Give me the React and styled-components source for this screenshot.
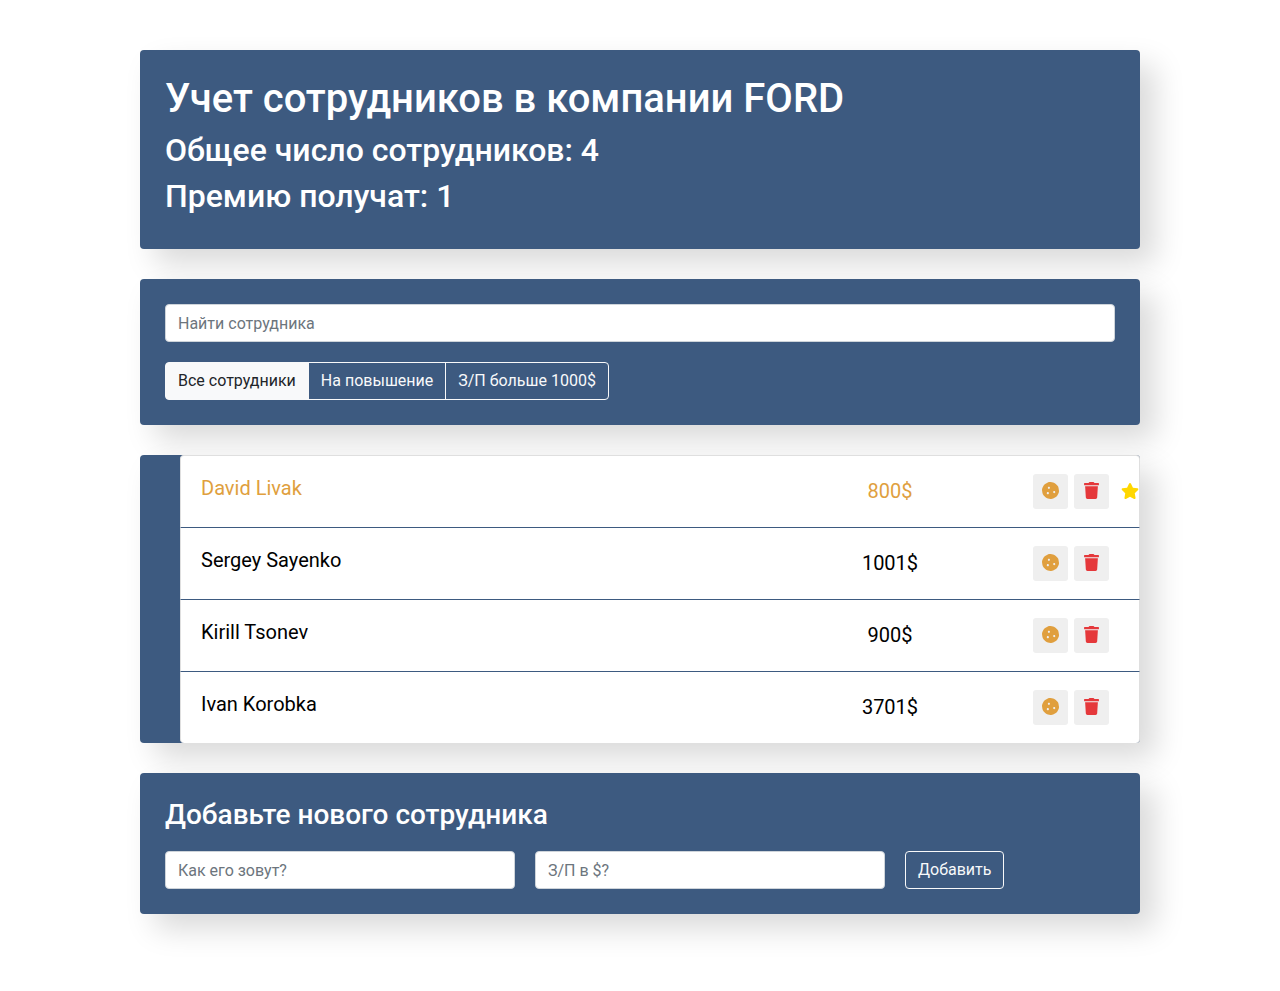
import React, { useState } from "react";
import styled, { createGlobalStyle, css } from "styled-components";
import { FaCookie, FaStar, FaTrash } from "react-icons/fa";

const GlobalStyle = createGlobalStyle`
  *, *::before, *::after { box-sizing: border-box; }
  body {
    margin: 0;
    background: #fff;
    color: #212529;
    font-family: Roboto, "Liberation Sans", sans-serif;
    font-size: 16px;
    line-height: 24px;
  }
`;

const Page = styled.main`
  max-width: 1000px;
  margin: 50px auto;
  display: flex;
  flex-direction: column;
  gap: 30px;
`;

const panel = css`
  background: #3d5a80;
  border-radius: 4px;
  box-shadow: 15px 15px 30px rgba(0, 0, 0, 0.15);
  color: #fff;
`;

const Panel = styled.section`
  ${panel}
  padding: 25px;
`;

const Header = styled.header`
  ${panel}
  display: flex;
  flex-direction: column;
  gap: 8px;
  padding: 25px 25px 34px;
`;

const Title = styled.h1`
  margin: 0;
  font-size: 40px;
  font-weight: 500;
  line-height: 48px;
`;

const Summary = styled.h2`
  margin: 0;
  font-size: 32px;
  font-weight: 500;
  line-height: 38px;
`;

const FormTitle = styled.h3`
  margin: 0 0 20px;
  font-size: 28px;
  font-weight: 500;
  line-height: 33px;
`;

const TextField = styled.input`
  display: block;
  width: 100%;
  height: 38px;
  padding: 6px 12px;
  border: 1px solid #ced4da;
  border-radius: 4px;
  background: #fff;
  color: #495057;
  font: inherit;
  &::placeholder { color: #6c757d; opacity: 1; }
`;

const OutlineButton = styled.button`
  padding: 6px 12px;
  border: 1px solid #f8f9fa;
  border-radius: 4px;
  background: ${(p) => (p.$active ? "#f8f9fa" : "transparent")};
  color: ${(p) => (p.$active ? "#212529" : "#f8f9fa")};
  font: inherit;
  white-space: nowrap;
  cursor: pointer;
`;

const FilterGroup = styled.div`
  display: flex;
  margin-top: 20px;
  ${OutlineButton}:not(:first-child) {
    margin-left: -1px;
    border-top-left-radius: 0;
    border-bottom-left-radius: 0;
  }
  ${OutlineButton}:not(:last-child) {
    border-top-right-radius: 0;
    border-bottom-right-radius: 0;
  }
`;

const StaffList = styled.ul`
  ${panel}
  margin: 0;
  padding: 0 0 0 40px;
  list-style: none;
`;

const StaffRow = styled.li`
  display: flex;
  align-items: center;
  height: 72px;
  padding-left: 20px;
  border: 1px solid #dfdfdf;
  border-top: 0;
  border-bottom-color: #3d5a80;
  background: #fff;
  color: ${(p) => (p.$raise ? "#e09f3e" : "#000")};
  font-size: 20px;
  line-height: 30px;
  &:first-child {
    height: 73px;
    border-top: 1px solid #dfdfdf;
    border-radius: 4px 4px 0 0;
  }
  &:last-child {
    height: 71px;
    border-bottom: 0;
    border-radius: 0 0 4px 4px;
  }
`;

const Name = styled.span`
  flex: 1;
  align-self: flex-start;
  padding-top: 17px;
  cursor: pointer;
`;

const Salary = styled.input`
  width: 200px;
  height: 36px;
  margin-right: 43px;
  padding: 0 0 2px;
  border: 0;
  background: transparent;
  color: inherit;
  font: inherit;
  text-align: center;
`;

const Actions = styled.div`
  display: flex;
  align-items: center;
  gap: 6px;
`;

const IconButton = styled.button`
  display: flex;
  align-items: center;
  justify-content: center;
  width: 35px;
  height: 35px;
  padding: 0 0 2px;
  border: 0;
  border-radius: 3px;
  background: #efefef;
  color: ${(p) => p.$color};
  font-size: 17px;
  cursor: pointer;
`;

const StarSlot = styled.span`
  display: flex;
  justify-content: flex-end;
  width: 30px;
  padding-bottom: 1px;
  color: #ffd700;
  svg { width: 18px; height: 16px; }
`;

const AddForm = styled.form`
  display: flex;
  gap: 20px;
  ${TextField} { flex: 0 1 350px; min-width: 0; }
`;

const staff = [
  { name: "David Livak", salary: 800, raise: true },
  { name: "Sergey Sayenko", salary: 1001 },
  { name: "Kirill Tsonev", salary: 900 },
  { name: "Ivan Korobka", salary: 3701 },
];

const filters = ["Все сотрудники", "На повышение", "З/П больше 1000$"];

export default function App() {
  const [filter, setFilter] = useState(filters[0]);
  return (
    <>
      <GlobalStyle />
      <Page>
        <Header>
          <Title>Учет сотрудников в компании FORD</Title>
          <Summary>Общее число сотрудников: 4</Summary>
          <Summary>Премию получат: 1</Summary>
        </Header>
        <Panel>
          <TextField type="text" placeholder="Найти сотрудника" aria-label="Найти сотрудника" />
          <FilterGroup>
            {filters.map((label) => (
              <OutlineButton
                key={label}
                type="button"
                $active={label === filter}
                aria-pressed={label === filter}
                onClick={() => setFilter(label)}
              >
                {label}
              </OutlineButton>
            ))}
          </FilterGroup>
        </Panel>
        <StaffList>
          {staff.map(({ name, salary, raise }) => (
            <StaffRow key={name} $raise={raise}>
              <Name>{name}</Name>
              <Salary type="text" defaultValue={`${salary}$`} aria-label={name} />
              <Actions>
                <IconButton type="button" $color="#e09f3e" aria-label="Премия">
                  <FaCookie />
                </IconButton>
                <IconButton type="button" $color="#e5383b" aria-label="Удалить">
                  <FaTrash />
                </IconButton>
              </Actions>
              <StarSlot>{raise && <FaStar />}</StarSlot>
            </StaffRow>
          ))}
        </StaffList>
        <Panel>
          <FormTitle>Добавьте нового сотрудника</FormTitle>
          <AddForm onSubmit={(e) => e.preventDefault()}>
            <TextField type="text" placeholder="Как его зовут?" aria-label="Как его зовут?" />
            <TextField type="text" placeholder="З/П в $?" aria-label="З/П в $?" />
            <OutlineButton type="submit">Добавить</OutlineButton>
          </AddForm>
        </Panel>
      </Page>
    </>
  );
}
